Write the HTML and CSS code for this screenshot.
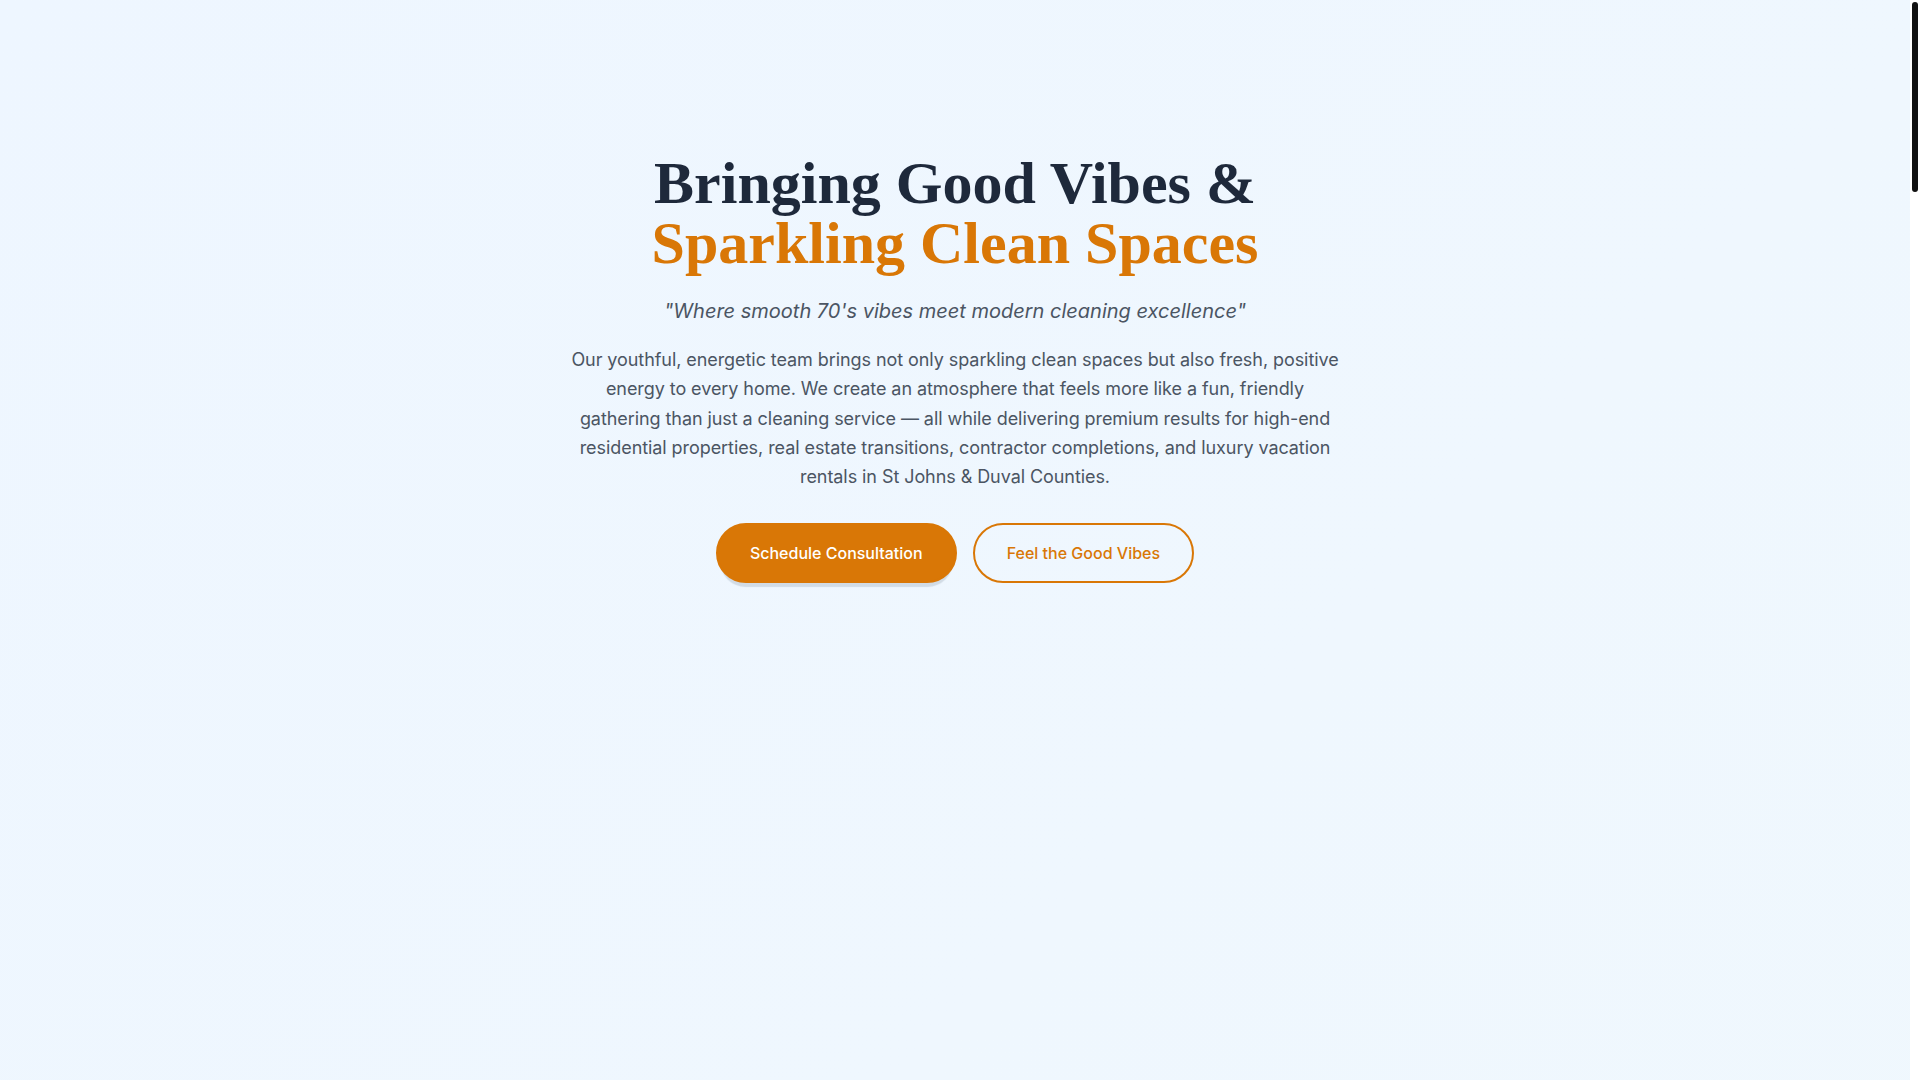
FILE: index.html
```html
<!DOCTYPE html>
<html lang="en">
<head>
<meta charset="utf-8">
<title>Good Vibes Cleaning</title>
<link rel="stylesheet" href="styles.css">
</head>
<body>
<main class="page">
  <section class="hero">
    <div class="hero-inner">
      <h1 class="hero-title">
        <span class="title-line">Bringing Good Vibes &amp;</span>
        <span class="title-line accent">Sparkling Clean Spaces</span>
      </h1>
      <p class="tagline">"Where smooth 70's vibes meet modern cleaning excellence"</p>
      <p class="intro">Our youthful, energetic team brings not only sparkling clean spaces but also fresh, positive energy to every home. We create an atmosphere that feels more like a fun, friendly gathering than just a cleaning service — all while delivering premium results for high-end residential properties, real estate transitions, contractor completions, and luxury vacation rentals in St Johns &amp; Duval Counties.</p>
      <div class="actions">
        <a class="btn btn-primary" href="#consult">Schedule Consultation</a>
        <a class="btn btn-outline" href="#vibes">Feel the Good Vibes</a>
      </div>
    </div>
  </section>
  <section class="below" id="vibes"></section>
</main>
<div class="scrollbar" aria-hidden="true"><div class="scrollbar-thumb"></div></div>
</body>
</html>
```

FILE: styles.css
```css
html {
  background: #ffffff;
  scrollbar-width: none;
}

html::-webkit-scrollbar {
  display: none;
}

body {
  margin: 0;
  padding-right: 10px;
  font-family: "Inter", "Liberation Sans", sans-serif;
  color: #4b5563;
}

.page {
  background: linear-gradient(135deg, #eef6ff 0%, #f0f8fd 50%, #eff9fa 100%);
}

.hero {
  min-height: 1080px;
  padding-top: 153px;
  box-sizing: border-box;
}

.hero-inner {
  max-width: 774px;
  margin: 0 auto;
  display: flex;
  flex-direction: column;
  align-items: center;
  text-align: center;
}

.hero-title {
  margin: 0 0 24px;
  font-family: "Liberation Serif", "Times New Roman", serif;
  font-weight: 700;
  font-size: 60px;
  line-height: 1;
  color: #1e293b;
}

.title-line {
  display: block;
}

.accent {
  color: #d97706;
}

.tagline {
  margin: 0 0 20px;
  font-style: italic;
  font-size: 20px;
  line-height: 28px;
  color: #4b5563;
}

.intro {
  margin: 0 0 32px;
  font-size: 18px;
  line-height: 1.625;
  letter-spacing: -0.07px;
  color: #4b5563;
}

.actions {
  display: flex;
  gap: 16px;
  justify-content: center;
}

.btn {
  display: inline-block;
  padding: 16px 32px;
  border: 2px solid #d97706;
  border-radius: 9999px;
  font-size: 16px;
  line-height: 24px;
  font-weight: 500;
  text-decoration: none;
}

.btn-primary {
  background: #d97706;
  color: #ffffff;
  box-shadow: 0 8px 1px -4px rgba(15, 40, 60, 0.13);
}

.btn-outline {
  background: transparent;
  color: #d97706;
}

.below {
  height: 4940px;
}

.scrollbar {
  position: fixed;
  top: 0;
  right: 0;
  width: 10px;
  height: 100vh;
  background: #ffffff;
}

.scrollbar-thumb {
  margin: 2px 2px 0;
  height: 190px;
  border-radius: 3px;
  background: #111111;
}
```
